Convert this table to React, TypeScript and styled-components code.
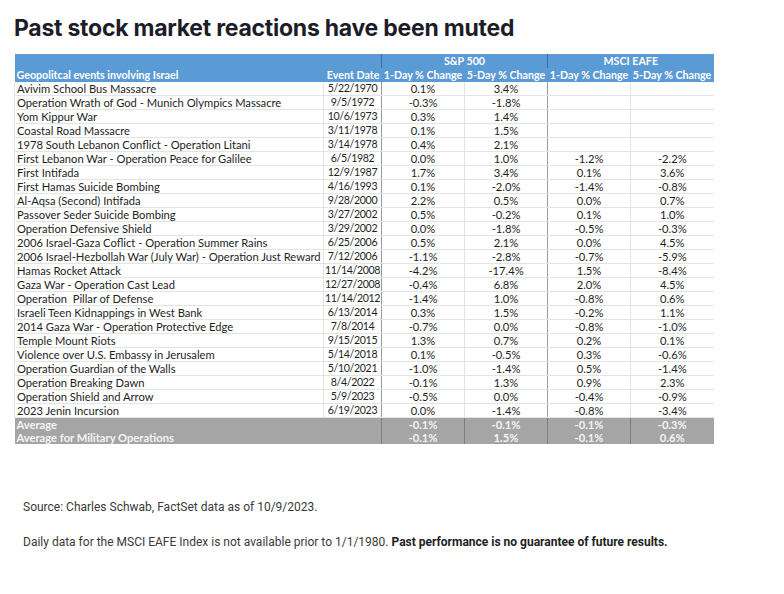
import React from "react";
import styled, { createGlobalStyle } from "styled-components";

const Global = createGlobalStyle`
  html, body { margin: 0; padding: 0; background: #ffffff; }
  body { font-family: "Lato", "Liberation Sans", sans-serif; }
`;

const Page = styled.div`
  width: 784px;
  height: 594px;
  box-sizing: border-box;
  padding: 12px 0 0 14px;
  background: #fff;
`;

const Title = styled.h1`
  margin: 0 0 10px 0;
  font-family: "Inter", "Liberation Sans", sans-serif;
  font-weight: 700;
  font-size: 23px;
  line-height: 32px;
  letter-spacing: -0.25px;
  color: #1d1d29;
`;

const Table = styled.table`
  border-collapse: collapse;
  table-layout: fixed;
  width: 699px;
  font-family: "Lato", "Liberation Sans", sans-serif;
  font-size: 11.2px;
  color: #1e1e1e;
`;

const HeadCell = styled.th<{ $align?: string; $divider?: boolean }>`
  background: #5b9bd5;
  color: #ffffff;
  font-weight: 700;
  font-size: 10.7px;
  height: 14px;
  padding: 0 2px;
  line-height: 14px;
  white-space: nowrap;
  overflow: hidden;
  text-align: ${(p) => p.$align || "center"};
  vertical-align: bottom;
  border-left: ${(p) => (p.$divider ? "1px solid #41699a" : "none")};
`;

const Cell = styled.td<{ $align?: string; $strong?: boolean }>`
  height: 13.94px;
  line-height: 13px;
  padding: 0 2px;
  white-space: pre;
  overflow: hidden;
  text-align: ${(p) => p.$align || "center"};
  border-bottom: 1px solid #e4e4e4;
  border-left: 1px solid ${(p) => (p.$strong ? "#9a9a9a" : "#e2e2e2")};
  box-sizing: border-box;
`;

const DateCell = styled(Cell)`
  padding: 0;
  font-size: 10.6px;
  letter-spacing: -0.35px;
`;

const AvgCell = styled.td<{ $align?: string; $line?: boolean }>`
  background: #a5a5a5;
  color: #f4f4f4;
  font-weight: 700;
  height: 13px;
  line-height: 13px;
  padding: 0 2px;
  white-space: nowrap;
  text-align: ${(p) => p.$align || "center"};
  border-left: ${(p) => (p.$line ? "1px solid #7e7e7e" : "none")};
`;

const AvgTop = styled.tr`
  border-top: 1px solid #8c8c8c;
`;

const Notes = styled.div`
  margin-top: 56px;
  padding-left: 9px;
  font-family: "Roboto", "Liberation Sans", sans-serif;
  font-size: 12px;
  color: #3a3a3a;
`;

const Note = styled.p`
  margin: 0 0 20px 0;
  line-height: 15px;
`;

const Strong = styled.span`
  font-weight: 700;
  color: #222;
`;

type Row = [string, string, string, string, string, string];

const rows: Row[] = [
  ["Avivim School Bus Massacre", "5/22/1970", "0.1%", "3.4%", "", ""],
  ["Operation Wrath of God - Munich Olympics Massacre", "9/5/1972", "-0.3%", "-1.8%", "", ""],
  ["Yom Kippur War", "10/6/1973", "0.3%", "1.4%", "", ""],
  ["Coastal Road Massacre", "3/11/1978", "0.1%", "1.5%", "", ""],
  ["1978 South Lebanon Conflict - Operation Litani", "3/14/1978", "0.4%", "2.1%", "", ""],
  ["First Lebanon War - Operation Peace for Galilee", "6/5/1982", "0.0%", "1.0%", "-1.2%", "-2.2%"],
  ["First Intifada", "12/9/1987", "1.7%", "3.4%", "0.1%", "3.6%"],
  ["First Hamas Suicide Bombing", "4/16/1993", "0.1%", "-2.0%", "-1.4%", "-0.8%"],
  ["Al-Aqsa (Second) Intifada", "9/28/2000", "2.2%", "0.5%", "0.0%", "0.7%"],
  ["Passover Seder Suicide Bombing", "3/27/2002", "0.5%", "-0.2%", "0.1%", "1.0%"],
  ["Operation Defensive Shield", "3/29/2002", "0.0%", "-1.8%", "-0.5%", "-0.3%"],
  ["2006 Israel-Gaza Coflict - Operation Summer Rains", "6/25/2006", "0.5%", "2.1%", "0.0%", "4.5%"],
  ["2006 Israel-Hezbollah War (July War) - Operation Just Reward", "7/12/2006", "-1.1%", "-2.8%", "-0.7%", "-5.9%"],
  ["Hamas Rocket Attack", "11/14/2008", "-4.2%", "-17.4%", "1.5%", "-8.4%"],
  ["Gaza War - Operation Cast Lead", "12/27/2008", "-0.4%", "6.8%", "2.0%", "4.5%"],
  ["Operation  Pillar of Defense", "11/14/2012", "-1.4%", "1.0%", "-0.8%", "0.6%"],
  ["Israeli Teen Kidnappings in West Bank", "6/13/2014", "0.3%", "1.5%", "-0.2%", "1.1%"],
  ["2014 Gaza War - Operation Protective Edge", "7/8/2014", "-0.7%", "0.0%", "-0.8%", "-1.0%"],
  ["Temple Mount Riots", "9/15/2015", "1.3%", "0.7%", "0.2%", "0.1%"],
  ["Violence over U.S. Embassy in Jerusalem", "5/14/2018", "0.1%", "-0.5%", "0.3%", "-0.6%"],
  ["Operation Guardian of the Walls", "5/10/2021", "-1.0%", "-1.4%", "0.5%", "-1.4%"],
  ["Operation Breaking Dawn", "8/4/2022", "-0.1%", "1.3%", "0.9%", "2.3%"],
  ["Operation Shield and Arrow", "5/9/2023", "-0.5%", "0.0%", "-0.4%", "-0.9%"],
  ["2023 Jenin Incursion", "6/19/2023", "0.0%", "-1.4%", "-0.8%", "-3.4%"],
];

const averages: Row[] = [
  ["Average", "", "-0.1%", "-0.1%", "-0.1%", "-0.3%"],
  ["Average for Military Operations", "", "-0.1%", "1.5%", "-0.1%", "0.6%"],
];

const widths = [309, 58, 83, 83, 83, 83];

export default function App() {
  return (
    <Page>
      <Global />
      <Title>Past stock market reactions have been muted</Title>
      <Table>
        <colgroup>
          {widths.map((w, i) => (
            <col key={i} style={{ width: w }} />
          ))}
        </colgroup>
        <thead>
          <tr>
            <HeadCell colSpan={2} />
            <HeadCell colSpan={2} $divider>S&amp;P 500</HeadCell>
            <HeadCell colSpan={2} $divider>MSCI EAFE</HeadCell>
          </tr>
          <tr>
            <HeadCell $align="left">Geopolitcal events involving Israel</HeadCell>
            <HeadCell $align="right">Event Date</HeadCell>
            <HeadCell>1-Day % Change</HeadCell>
            <HeadCell>5-Day % Change</HeadCell>
            <HeadCell>1-Day % Change</HeadCell>
            <HeadCell>5-Day % Change</HeadCell>
          </tr>
        </thead>
        <tbody>
          {rows.map((r) => (
            <tr key={r[0]}>
              <Cell $align="left">{r[0]}</Cell>
              <DateCell>{r[1]}</DateCell>
              <Cell $strong>{r[2]}</Cell>
              <Cell>{r[3]}</Cell>
              <Cell $strong>{r[4]}</Cell>
              <Cell>{r[5]}</Cell>
            </tr>
          ))}
          {averages.map((r, i) => {
            const Wrapper = i === 0 ? AvgTop : "tr";
            return (
              <Wrapper key={r[0]}>
                <AvgCell $align="left">{r[0]}</AvgCell>
                <AvgCell />
                <AvgCell $line>{r[2]}</AvgCell>
                <AvgCell $line>{r[3]}</AvgCell>
                <AvgCell $line>{r[4]}</AvgCell>
                <AvgCell $line>{r[5]}</AvgCell>
              </Wrapper>
            );
          })}
        </tbody>
      </Table>
      <Notes>
        <Note>Source: Charles Schwab, FactSet data as of 10/9/2023.</Note>
        <Note>
          Daily data for the MSCI EAFE Index is not available prior to 1/1/1980.{" "}
          <Strong>Past performance is no guarantee of future results.</Strong>
        </Note>
      </Notes>
    </Page>
  );
}
